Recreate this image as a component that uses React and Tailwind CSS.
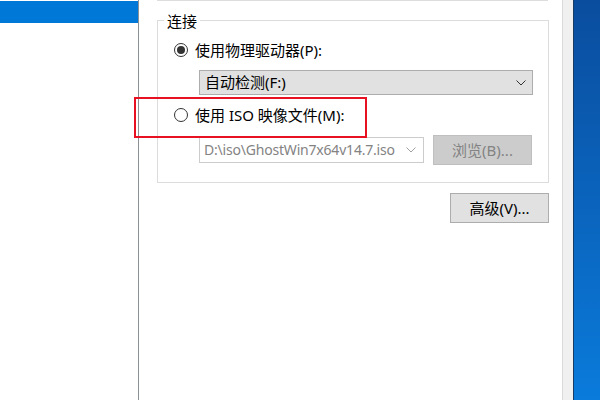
import React from "react";

const font = { fontFamily: '"Noto Sans", "Noto Sans CJK SC", sans-serif' };

const Radio = ({ checked }) => (
  <span className="flex h-[14px] w-[14px] shrink-0 items-center justify-center rounded-full border border-[#333333] bg-white">
    {checked && <span className="h-[8px] w-[8px] rounded-full bg-[#333333]" />}
  </span>
);

const Chevron = ({ color }) => (
  <svg width="10" height="6" viewBox="0 0 10 6" className="shrink-0">
    <polyline points="0.5,0.5 5,5 9.5,0.5" fill="none" stroke={color} strokeWidth="1" />
  </svg>
);

export default function App() {
  return (
    <div
      className="flex h-[400px] w-[600px] overflow-hidden bg-white text-[15px] leading-none text-black"
      style={font}
    >
      {/* left tree panel */}
      <div className="w-[139px] shrink-0 border-r border-[#8c9196] bg-white">
        <div className="mt-px h-[22px] w-[138px] bg-[#0078d7]" />
      </div>

      {/* settings pane */}
      <div className="relative flex-1 pl-[18px]">
        <div className="h-px w-[391px] bg-[#dddddd]" />

        <div className="relative mt-[19px] h-[163px] w-[392px] border border-[#dcdcdc]">
          <span className="absolute -top-[9px] left-[6px] bg-white px-[3px] leading-[18px]">连接</span>

          <div className="flex flex-col pl-[16px] pt-[21px]">
            <div className="flex h-[16px] items-center gap-[7px]">
              <Radio checked />
              <span>使用物理驱动器(P):</span>
            </div>

            <div className="ml-[25px] mt-[12px] flex h-[25px] w-[334px] items-center justify-between border border-[#adadad] bg-[#e1e1e1] pl-[5px] pr-[6px]">
              <span>自动检测(F:)</span>
              <Chevron color="#333333" />
            </div>

            <div className="mt-[12px] flex h-[16px] items-center gap-[7px]">
              <Radio />
              <span>使用 ISO 映像文件(M):</span>
            </div>

            <div className="ml-[25px] mt-[12px] flex items-center gap-[9px]">
              <div className="flex h-[26px] w-[225px] items-center justify-between border border-[#cccccc] bg-white pl-[4px] pr-[7px] text-[#838383]">
                <span className="text-[14px] tracking-[-0.2px]">D:\iso\GhostWin7x64v14.7.iso</span>
                <Chevron color="#a0a0a0" />
              </div>
              <div className="flex h-[30px] w-[99px] items-center justify-center border border-[#bfbfbf] bg-[#cccccc] text-[#838383]">
                浏览(B)...
              </div>
            </div>
          </div>
        </div>

        <div className="ml-[293px] mt-[10px] flex h-[30px] w-[99px] items-center justify-center border border-[#adadad] bg-[#e1e1e1]">
          高级(V)...
        </div>

        {/* red highlight drawn over the second option */}
        <div className="pointer-events-none absolute left-[-5px] top-[97px] h-[41px] w-[233px] border-2 border-[#e81123]" />
      </div>

      {/* window edge */}
      <div className="w-[11px] shrink-0 border-l border-[#dadada] bg-[#f0f0f0]" />

      {/* desktop */}
      <div className="w-[27px] shrink-0 border-l border-[#1a3d66] bg-linear-to-b from-[#0a4d9e] to-[#0a7bdb]" />
    </div>
  );
}
